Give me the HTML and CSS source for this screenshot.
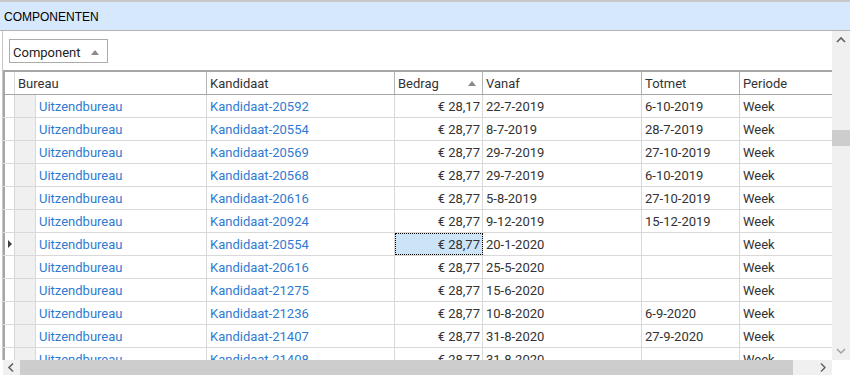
FILE: index.html
```html
<!DOCTYPE html>
<html lang="nl">
<head>
  <meta charset="UTF-8">
  <title>Componenten</title>
  <link rel="stylesheet" href="styles.css">
</head>
<body>
  <div class="window">
    <div class="title-bar">COMPONENTEN</div>

    <div class="main">
      <div class="content">
        <div class="group-box">
          <span>Component</span>
          <span class="sort-up"></span>
        </div>

        <div class="grid">
          <div class="row head">
            <div class="cell ind"></div>
            <div class="cell bureau-head">Bureau</div>
            <div class="cell kand">Kandidaat</div>
            <div class="cell bedrag sorted">Bedrag <span class="sort-up"></span></div>
            <div class="cell vanaf">Vanaf</div>
            <div class="cell totmet">Totmet</div>
            <div class="cell periode">Periode</div>
          </div>

          <div class="row">
            <div class="cell ind"></div><div class="cell indent"></div>
            <div class="cell bureau link">Uitzendbureau</div><div class="cell kand link">Kandidaat-20592</div>
            <div class="cell bedrag num">€ 28,17</div><div class="cell vanaf">22-7-2019</div>
            <div class="cell totmet">6-10-2019</div><div class="cell periode">Week</div>
          </div>
          <div class="row">
            <div class="cell ind"></div><div class="cell indent"></div>
            <div class="cell bureau link">Uitzendbureau</div><div class="cell kand link">Kandidaat-20554</div>
            <div class="cell bedrag num">€ 28,77</div><div class="cell vanaf">8-7-2019</div>
            <div class="cell totmet">28-7-2019</div><div class="cell periode">Week</div>
          </div>
          <div class="row">
            <div class="cell ind"></div><div class="cell indent"></div>
            <div class="cell bureau link">Uitzendbureau</div><div class="cell kand link">Kandidaat-20569</div>
            <div class="cell bedrag num">€ 28,77</div><div class="cell vanaf">29-7-2019</div>
            <div class="cell totmet">27-10-2019</div><div class="cell periode">Week</div>
          </div>
          <div class="row">
            <div class="cell ind"></div><div class="cell indent"></div>
            <div class="cell bureau link">Uitzendbureau</div><div class="cell kand link">Kandidaat-20568</div>
            <div class="cell bedrag num">€ 28,77</div><div class="cell vanaf">29-7-2019</div>
            <div class="cell totmet">6-10-2019</div><div class="cell periode">Week</div>
          </div>
          <div class="row">
            <div class="cell ind"></div><div class="cell indent"></div>
            <div class="cell bureau link">Uitzendbureau</div><div class="cell kand link">Kandidaat-20616</div>
            <div class="cell bedrag num">€ 28,77</div><div class="cell vanaf">5-8-2019</div>
            <div class="cell totmet">27-10-2019</div><div class="cell periode">Week</div>
          </div>
          <div class="row">
            <div class="cell ind"></div><div class="cell indent"></div>
            <div class="cell bureau link">Uitzendbureau</div><div class="cell kand link">Kandidaat-20924</div>
            <div class="cell bedrag num">€ 28,77</div><div class="cell vanaf">9-12-2019</div>
            <div class="cell totmet">15-12-2019</div><div class="cell periode">Week</div>
          </div>
          <div class="row current">
            <div class="cell ind"><span class="row-arrow"></span></div><div class="cell indent"></div>
            <div class="cell bureau link">Uitzendbureau</div><div class="cell kand link">Kandidaat-20554</div>
            <div class="cell bedrag num focused">€ 28,77</div><div class="cell vanaf">20-1-2020</div>
            <div class="cell totmet"></div><div class="cell periode">Week</div>
          </div>
          <div class="row">
            <div class="cell ind"></div><div class="cell indent"></div>
            <div class="cell bureau link">Uitzendbureau</div><div class="cell kand link">Kandidaat-20616</div>
            <div class="cell bedrag num">€ 28,77</div><div class="cell vanaf">25-5-2020</div>
            <div class="cell totmet"></div><div class="cell periode">Week</div>
          </div>
          <div class="row">
            <div class="cell ind"></div><div class="cell indent"></div>
            <div class="cell bureau link">Uitzendbureau</div><div class="cell kand link">Kandidaat-21275</div>
            <div class="cell bedrag num">€ 28,77</div><div class="cell vanaf">15-6-2020</div>
            <div class="cell totmet"></div><div class="cell periode">Week</div>
          </div>
          <div class="row">
            <div class="cell ind"></div><div class="cell indent"></div>
            <div class="cell bureau link">Uitzendbureau</div><div class="cell kand link">Kandidaat-21236</div>
            <div class="cell bedrag num">€ 28,77</div><div class="cell vanaf">10-8-2020</div>
            <div class="cell totmet">6-9-2020</div><div class="cell periode">Week</div>
          </div>
          <div class="row">
            <div class="cell ind"></div><div class="cell indent"></div>
            <div class="cell bureau link">Uitzendbureau</div><div class="cell kand link">Kandidaat-21407</div>
            <div class="cell bedrag num">€ 28,77</div><div class="cell vanaf">31-8-2020</div>
            <div class="cell totmet">27-9-2020</div><div class="cell periode">Week</div>
          </div>
          <div class="row">
            <div class="cell ind"></div><div class="cell indent"></div>
            <div class="cell bureau link">Uitzendbureau</div><div class="cell kand link">Kandidaat-21408</div>
            <div class="cell bedrag num">€ 28,77</div><div class="cell vanaf">31-8-2020</div>
            <div class="cell totmet"></div><div class="cell periode">Week</div>
          </div>
        </div>
      </div>

      <div class="vscroll">
        <svg class="chev" width="18" height="18" viewBox="0 0 18 18"><polyline points="5,11 9,7 13,11" fill="none" stroke="#606060" stroke-width="1.6"/></svg>
        <div class="vtrack"><div class="vthumb"></div></div>
        <svg class="chev" width="18" height="18" viewBox="0 0 18 18"><polyline points="5,7 9,11 13,7" fill="none" stroke="#a0a0a0" stroke-width="1.4"/></svg>
      </div>
    </div>

    <div class="bottom">
      <div class="hscroll">
        <svg class="chev" width="17" height="15" viewBox="0 0 17 15"><polyline points="10,3.5 6,7.5 10,11.5" fill="none" stroke="#606060" stroke-width="1.6"/></svg>
        <div class="hthumb"></div>
        <svg class="chev" width="17" height="15" viewBox="0 0 17 15"><polyline points="6,3.5 10,7.5 6,11.5" fill="none" stroke="#606060" stroke-width="1.4"/></svg>
      </div>
      <div class="corner"></div>
    </div>
  </div>
</body>
</html>
```

FILE: styles.css
```css
/* Global reset */
* {
  margin: 0;
  padding: 0;
  box-sizing: border-box;
}

body {
  background-color: #ffffff;
  font-family: Roboto, "Liberation Sans", sans-serif;
  font-size: 13px;
  color: #333333;
  overflow: hidden;
}

.window {
  width: 850px;
  height: 375px;
  display: flex;
  flex-direction: column;
}

.title-bar {
  height: 31px;
  border-top: 2px solid #c8c8c8;
  border-bottom: 1px solid #b4b4b4;
  background-color: #d6e8fc;
  font-family: "Liberation Sans", Arial, sans-serif;
  font-size: 12px;
  color: #000000;
  line-height: 30px;
  padding-left: 4px;
}

.main {
  flex: 1;
  display: flex;
  min-height: 0;
}

.content {
  flex: 1;
  margin-left: 2px;
  border-left: 1px solid #c8c8c8;
  overflow: hidden;
  padding-top: 8px;
}

/* group-by box */
.group-box {
  width: 99px;
  height: 24px;
  margin-left: 6px;
  border: 1px solid #ababab;
  display: flex;
  align-items: center;
  justify-content: space-between;
  padding: 2px 8px 0 3px;
  color: #222222;
}

.sort-up {
  display: inline-block;
  width: 0;
  height: 0;
  border-left: 4px solid transparent;
  border-right: 4px solid transparent;
  border-bottom: 5px solid #8a8a8a;
}

/* grid */
.grid {
  margin-top: 7px;
  border-top: 2px solid #a6a6a6;
}

.row {
  display: flex;
  height: 23px;
  border-bottom: 1px solid #d9d9d9;
}

.row.head {
  border-bottom: 1px solid #a6a6a6;
}

.cell {
  height: 100%;
  border-right: 1px solid #d9d9d9;
  padding: 0 3px;
  line-height: 24px;
  white-space: nowrap;
  overflow: hidden;
  flex-shrink: 0;
}

.head .cell { border-right-color: #b4b4b4; }

.ind {
  padding: 0;
  border-left: 2px solid #a6a6a6;
  width: 12px;
  position: relative;
}

.row.head .ind { border-right-color: #d9d9d9; }

.indent {
  width: 21px;
  background-color: #f0f0f0;
}

.bureau-head { width: 192px; }
.bureau { width: 171px; }
.kand { width: 188px; }
.bedrag { width: 88px; }
.vanaf { width: 159px; }
.totmet { width: 98px; }
.periode { width: 92px; border-right: none; }

.sorted {
  display: flex;
  align-items: center;
  justify-content: space-between;
  padding-right: 6px;
  padding-top: 1px;
}

.num {
  text-align: right;
  padding-right: 2px;
}

.link { color: #2f7bd2; }

.focused {
  background-color: #cce4f7;
  outline: 1px dotted #000000;
  outline-offset: -1px;
}

.row-arrow {
  position: absolute;
  left: 3px;
  top: 7px;
  width: 0;
  height: 0;
  border-top: 4px solid transparent;
  border-bottom: 4px solid transparent;
  border-left: 4px solid #404040;
}

/* scrollbars */
.vscroll {
  width: 18px;
  background-color: #f0f0f0;
  display: flex;
  flex-direction: column;
}

.chev { display: block; flex-shrink: 0; }

.vtrack {
  flex: 1;
  padding-top: 81px;
}

.vthumb {
  height: 16px;
  background-color: #cdcdcd;
}

.bottom {
  height: 15px;
  display: flex;
}

.hscroll {
  flex: 1;
  margin-left: 3px;
  background-color: #f0f0f0;
  display: flex;
  align-items: center;
}

.hthumb {
  width: 773px;
  height: 15px;
  background-color: #cdcdcd;
  margin-right: 22px;
}

.corner {
  width: 18px;
  background-color: #ffffff;
}
```
